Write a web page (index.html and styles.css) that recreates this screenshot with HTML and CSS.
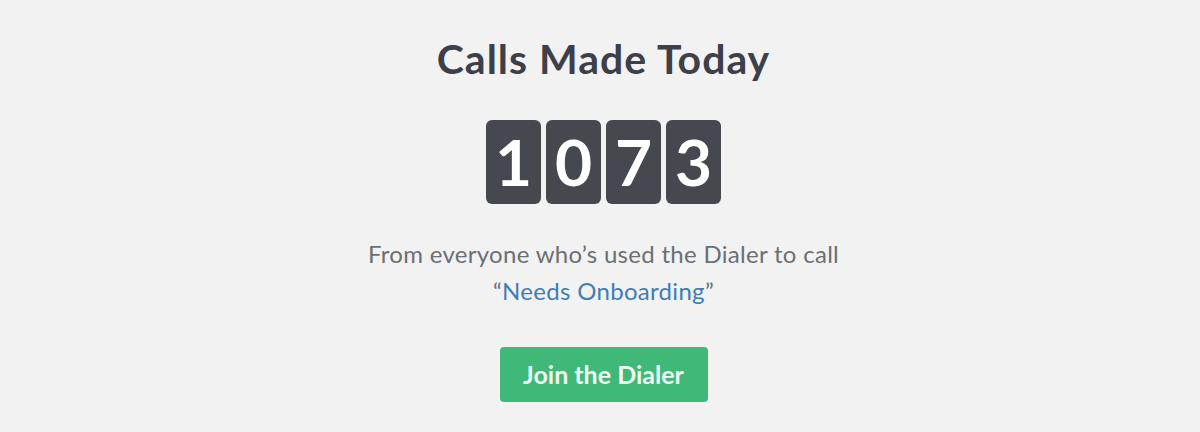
FILE: index.html
```html
<!DOCTYPE html>
<html lang="en">
<head>
<meta charset="utf-8">
<title>Calls Made Today</title>
<link rel="stylesheet" href="styles.css">
</head>
<body>
<main class="panel">
  <h1 class="title">Calls Made Today</h1>
  <div class="counter">
    <span class="digit">1</span>
    <span class="digit">0</span>
    <span class="digit">7</span>
    <span class="digit">3</span>
  </div>
  <p class="caption">From everyone who’s used the Dialer to call<br>“<a class="link" href="#">Needs Onboarding</a>”</p>
  <a class="button" href="#">Join the Dialer</a>
</main>
</body>
</html>
```
FILE: styles.css
```css
html, body {
  margin: 0;
  padding: 0;
  background: #f2f2f2;
}
body {
  width: 1200px;
  height: 432px;
  overflow: hidden;
  font-family: Lato, "Open Sans", sans-serif;
}
.panel {
  display: flex;
  flex-direction: column;
  align-items: center;
  padding-top: 35px;
  padding-left: 7px;
}
.title {
  margin: 0;
  font-size: 41px;
  line-height: 48px;
  font-weight: 700;
  letter-spacing: 1px;
  color: #3d4049;
}
.counter {
  display: flex;
  gap: 5px;
  margin-top: 37px;
}
.digit {
  width: 55px;
  height: 84px;
  border-radius: 6px;
  background: #45484f;
  color: #ffffff;
  font-size: 64px;
  line-height: 84px;
  text-align: center;
  font-weight: 700;
}
.caption {
  margin: 30.5px 0 0;
  font-size: 24px;
  line-height: 37px;
  letter-spacing: 0.3px;
  color: #6c6f74;
  text-align: center;
}
.link {
  color: #3f7db5;
  text-decoration: none;
}
.button {
  margin-top: 38px;
  width: 208px;
  height: 55px;
  border-radius: 4px;
  background: #40b877;
  color: #eefaf2;
  font-size: 25px;
  line-height: 55px;
  font-weight: 700;
  text-align: center;
  text-decoration: none;
}
```
